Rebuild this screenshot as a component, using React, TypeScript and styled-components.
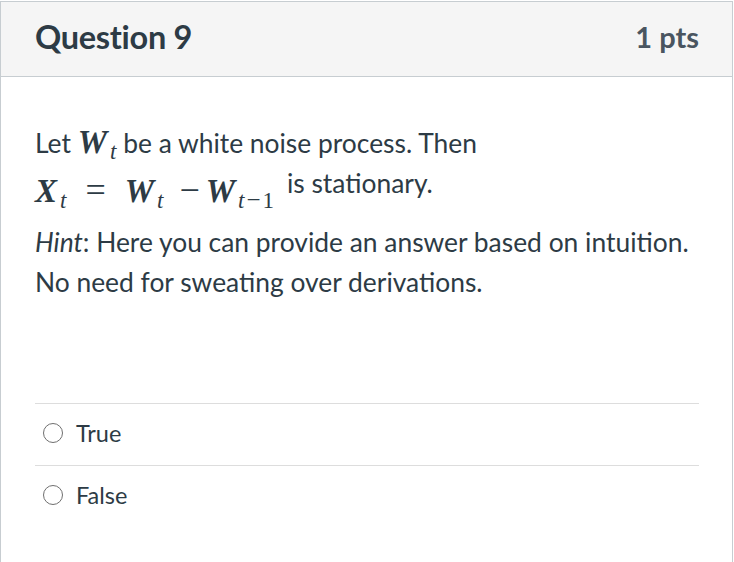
import React from "react";
import styled, { createGlobalStyle } from "styled-components";

const GlobalStyle = createGlobalStyle`
  html, body {
    margin: 0;
    padding: 0;
    background: #fff;
  }
  body {
    font-family: Lato, "Liberation Sans", sans-serif;
    color: #2d3b45;
  }
`;

const Card = styled.div`
  margin-top: 1px;
  width: 731px;
  border: 1px solid #c7cdd1;
  border-bottom: none;
  min-height: 560px;
`;

const Header = styled.div`
  height: 75px;
  box-sizing: border-box;
  background: #f5f5f5;
  border-bottom: 1px solid #c7cdd1;
  display: flex;
  align-items: center;
  justify-content: space-between;
  padding: 0 33px 5px 34px;
`;

const Title = styled.h2`
  margin: 0;
  font-size: 32.5px;
  font-weight: 700;
  color: #2d3b45;
  letter-spacing: -0.3px;
`;

const Points = styled.div`
  font-size: 29px;
  font-weight: 700;
  color: #4a5560;
`;

const Body = styled.div`
  padding: 46px 30px 0 34px;
`;

const Text = styled.p`
  margin: 0 0 19px;
  font-size: 26.4px;
  line-height: 40px;
`;

const Math = styled.span<{ $shift?: number }>`
  font-family: "Liberation Serif", "DejaVu Serif", serif;
  font-style: italic;
  font-weight: 700;
  font-size: 33px;
  line-height: 0;
  position: relative;
  top: ${(p) => p.$shift || 0}px;
`;

const Sub = styled.sub<{ $after?: number }>`
  font-size: 23px;
  font-weight: 400;
  vertical-align: -6px;
  line-height: 0;
  margin-left: 3px;
  margin-right: ${(p) => p.$after || 0}px;
`;

const SubOp = styled.span`
  font-style: normal;
  display: inline-block;
  margin: 0 2px;
  font-size: 25px;
`;

const Up = styled.span`
  font-style: normal;
`;

const Op = styled.span<{ $left: number; $right: number }>`
  font-style: normal;
  font-weight: 400;
  font-size: 36px;
  display: inline-block;
  margin: 0 ${(p) => p.$right}px 0 ${(p) => p.$left}px;
`;

const Answers = styled.div`
  margin-top: 101px;
  margin-right: 3px;
`;

const Answer = styled.label`
  display: flex;
  align-items: center;
  gap: 13px;
  height: 62px;
  box-sizing: border-box;
  padding: 0 0 4px 8px;
  border-top: 1px solid #dddddd;
  font-size: 23.5px;
  color: #2d3b45;
`;

const Radio = styled.span`
  width: 18px;
  height: 18px;
  border: 1.5px solid #6f6f6f;
  border-radius: 50%;
  box-sizing: content-box;
`;

export default function App() {
  return (
    <>
      <GlobalStyle />
      <Card>
        <Header>
          <Title>Question 9</Title>
          <Points>1 pts</Points>
        </Header>
        <Body>
          <Text>
            Let{" "}
            <Math>
              W<Sub>t</Sub>
            </Math>{" "}
            be a white noise process. Then
            <br />
            <Math $shift={9}>
              X<Sub>t</Sub>
              <Op $left={19} $right={19}>=</Op>W<Sub>t</Sub>
              <Op $left={16} $right={6}>−</Op>W
              <Sub $after={6}>
                t<SubOp>−</SubOp>
                <Up>1</Up>
              </Sub>
            </Math>{" "}
            is stationary.
          </Text>
          <Text>
            <i>Hint</i>: Here you can provide an answer based on intuition.
            No need for sweating over derivations.
          </Text>
          <Answers>
            <Answer>
              <Radio />
              True
            </Answer>
            <Answer>
              <Radio />
              False
            </Answer>
          </Answers>
        </Body>
      </Card>
    </>
  );
}
